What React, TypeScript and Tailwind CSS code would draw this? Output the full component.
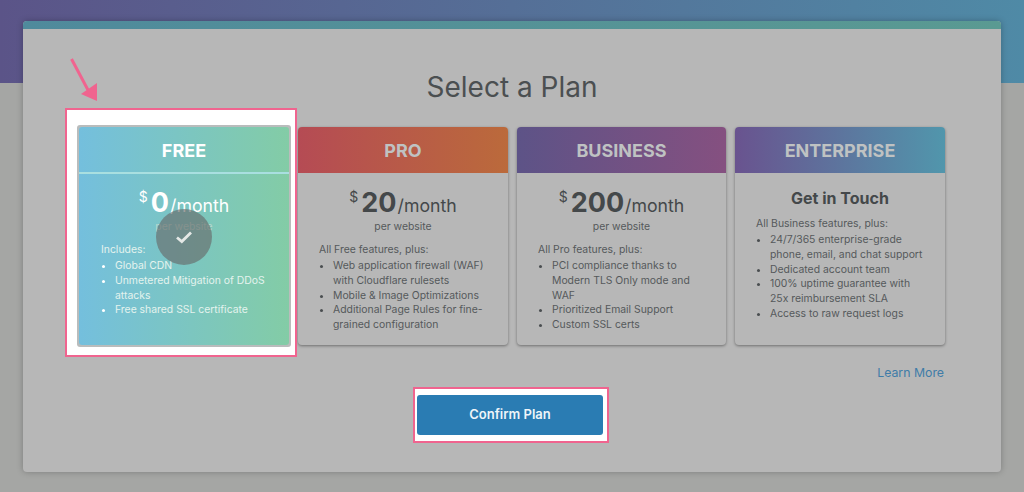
import React from "react";

type Plan = {
  name: string;
  head: string;
  price?: string;
  intro: string;
  items: string[];
};

const plans: Plan[] = [
  {
    name: "PRO",
    head: "bg-[linear-gradient(90deg,#b54b54,#bb6a3b)]",
    price: "20",
    intro: "All Free features, plus:",
    items: [
      "Web application firewall (WAF) with Cloudflare rulesets",
      "Mobile & Image Optimizations",
      "Additional Page Rules for fine-grained configuration",
    ],
  },
  {
    name: "BUSINESS",
    head: "bg-[linear-gradient(90deg,#5d5387,#855080)]",
    price: "200",
    intro: "All Pro features, plus:",
    items: [
      "PCI compliance thanks to Modern TLS Only mode and WAF",
      "Prioritized Email Support",
      "Custom SSL certs",
    ],
  },
  {
    name: "ENTERPRISE",
    head: "bg-[linear-gradient(90deg,#69538f,#5196ac)]",
    intro: "All Business features, plus:",
    items: [
      "24/7/365 enterprise-grade phone, email, and chat support",
      "Dedicated account team",
      "100% uptime guarantee with 25x reimbursement SLA",
      "Access to raw request logs",
    ],
  },
];

function Price({ value, light }: { value: string; light?: boolean }) {
  return (
    <div className={`flex items-baseline justify-center leading-none ${light ? "text-white" : "text-[#44484a]"}`}>
      <span className="relative top-[-10px] mr-[3px] text-[14px]">$</span>
      <span className="text-[27px] font-bold">{value}</span>
      <span className="ml-[1px] text-[17.7px]">/month</span>
    </div>
  );
}

function List({ intro, items, dark }: { intro: string; items: string[]; dark: boolean }) {
  return (
    <div className={`text-[10.4px] leading-[14.67px] ${dark ? "text-[#55595b]" : "text-[#e4f3ee]"}`}>
      <p>{intro}</p>
      <ul className={`mt-[1.5px] list-disc pl-[14px] ${dark ? "marker:text-[#4a4e50]" : "marker:text-white"}`}>
        {items.map((i) => (
          <li key={i}>{i}</li>
        ))}
      </ul>
    </div>
  );
}

function FreeCard() {
  return (
    <div className="relative h-[218px]">
      {/* annotation: white box with a pink outline */}
      <div className="absolute left-[-14px] top-[-19px] h-[249px] w-[232px] border-2 border-[#f0648f] bg-white" />
      <svg className="absolute left-[-10px] top-[-70px]" width="34" height="50" viewBox="0 0 34 50">
        <path d="M2.5 2 L19 33" stroke="#f0648f" strokeWidth="3" fill="none" />
        <path d="M28 26 L28 44 L12 37 Z" fill="#f0648f" />
      </svg>
      <div className="absolute inset-x-[-2px] top-[-2px] h-[222px] rounded-[3px] bg-[#b9bcbc]" />
      <div className="relative flex h-[218px] flex-col rounded-[3px] bg-[linear-gradient(90deg,#74bfdd,#83cca6)]">
        <div className="flex h-[47px] shrink-0 items-center justify-center border-b-2 border-[#a9dfe0] pt-[2px] text-[18px] font-bold text-white">
          FREE
        </div>
        <div className="mt-[15px]">
          <Price value="0" light />
        </div>
        <p className="mt-[4px] text-center text-[10.4px] leading-[14px] text-[#b6d9cf]">per website</p>
        <div className="mt-[9px] px-[22px]">
          <List
            dark={false}
            intro="Includes:"
            items={["Global CDN", "Unmetered Mitigation of DDoS attacks", "Free shared SSL certificate"]}
          />
        </div>
        <div className="absolute left-[77px] top-[82px] flex h-[56px] w-[56px] items-center justify-center rounded-full bg-[rgba(103,103,103,0.625)]">
          <svg width="18" height="14" viewBox="0 0 18 14">
            <path d="M2 7.5 L6.8 11.5 L16 2.5" stroke="#e4e8e6" strokeWidth="2.8" fill="none" />
          </svg>
        </div>
      </div>
    </div>
  );
}

function Card({ plan }: { plan: Plan }) {
  return (
    <div className="flex h-[218px] flex-col overflow-hidden rounded-[4px] bg-[#b7b7b7] shadow-[0_1px_3px_rgba(0,0,0,0.4)]">
      <div className={`flex h-[46px] shrink-0 items-center justify-center text-[18px] font-bold text-[#bfc2c2] ${plan.head}`}>
        {plan.name}
      </div>
      {plan.price ? (
        <div className="mt-[16px]">
          <Price value={plan.price} />
          <p className="mt-[4px] text-center text-[10.4px] leading-[14px] text-[#55595b]">per website</p>
        </div>
      ) : (
        <h3 className="mt-[14px] text-center text-[16px] font-bold leading-[22px] text-[#44484a]">Get in Touch</h3>
      )}
      <div className={`px-[21px] ${plan.price ? "mt-[9px]" : "mt-[8px]"}`}>
        <List dark intro={plan.intro} items={plan.items} />
      </div>
    </div>
  );
}

export default function App() {
  return (
    <div
      className="h-[492px] w-[1024px] overflow-hidden bg-[#a5a6a4] bg-[linear-gradient(90deg,#5b5488,#4f8aa6)] bg-[length:100%_83px] bg-no-repeat pt-[21px]"
      style={{ fontFamily: "Inter, 'Liberation Sans', sans-serif" }}
    >
      <div className="relative ml-[23px] h-[451px] w-[978px] overflow-hidden rounded-[4px] bg-[#b7b7b7] shadow-[0_0_6px_rgba(0,0,0,0.25)]">
        <div className="h-[8px] bg-[linear-gradient(90deg,#4f8a9c,#5a9a92)]" />
        <h1 className="mt-[38px] text-center text-[28px] leading-[40px] text-[#4b4f51]">Select a Plan</h1>
        <div className="mt-[20px] grid grid-cols-[210px_210px_209px_210px] gap-x-[9px] pl-[56px]">
          <FreeCard />
          {plans.map((p) => (
            <Card key={p.name} plan={p} />
          ))}
        </div>
        <div className="mt-[20px] pr-[57px] text-right text-[12.3px] leading-[16px] text-[#3f7ca8]">Learn More</div>
        <div className="mt-[6px] flex justify-center pr-[2px]">
          <div className="border-2 border-[#f0648f] bg-white pb-[6px] pl-[2px] pr-[4px] pt-[6px]">
            <button className="h-[40px] w-[186px] rounded-[3px] bg-[#2a7cb3] text-[13px] font-semibold text-[#eef5f9]">
              Confirm Plan
            </button>
          </div>
        </div>
      </div>
    </div>
  );
}
